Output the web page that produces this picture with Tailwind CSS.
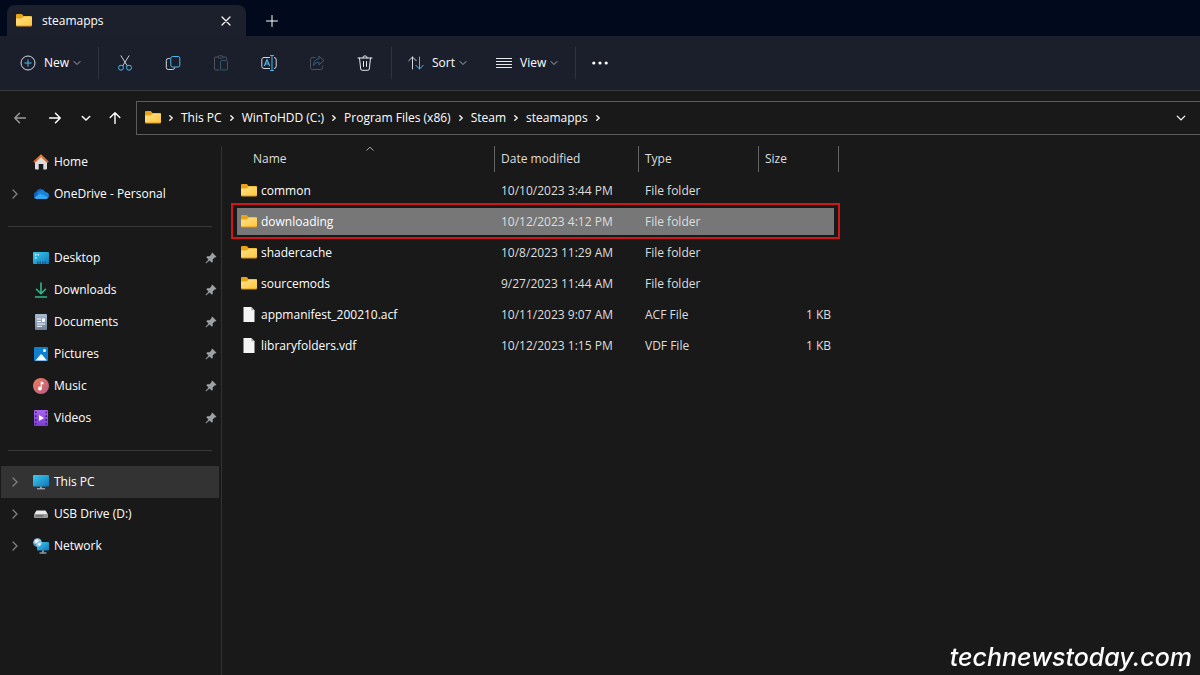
<!DOCTYPE html>
<html lang="en">

<head>
  <meta charset="UTF-8" />
  <meta name="viewport" content="width=device-width, initial-scale=1" />
  <title>steamapps</title>
  <script src="https://cdn.jsdelivr.net/npm/@tailwindcss/browser@4"></script>
</head>

<body class="min-h-screen flex flex-col bg-[#191919] text-white text-xs font-['Open_Sans','Noto_Sans',sans-serif]">

  <!-- Shared icons -->
  <svg class="absolute size-0" aria-hidden="true">
    <defs>
      <linearGradient id="gFolder" x1="0" y1="0" x2="1" y2="1">
        <stop offset="0" stop-color="#ffe28a" />
        <stop offset="1" stop-color="#ffc63c" />
      </linearGradient>
      <linearGradient id="gScreen" x1="0" y1="0" x2="1" y2="1">
        <stop offset="0" stop-color="#3ccbf0" />
        <stop offset="1" stop-color="#0f78b8" />
      </linearGradient>
      <linearGradient id="gMusic" x1="0" y1="0" x2="1" y2="1">
        <stop offset="0" stop-color="#f0805a" />
        <stop offset="1" stop-color="#b45a86" />
      </linearGradient>
      <linearGradient id="gRoof" x1="0" y1="0" x2="0" y2="1">
        <stop offset="0" stop-color="#f08a2c" />
        <stop offset="1" stop-color="#c8582a" />
      </linearGradient>
      <linearGradient id="gVideo" x1="0" y1="0" x2="0" y2="1">
        <stop offset="0" stop-color="#a964ec" />
        <stop offset="1" stop-color="#7a3fd0" />
      </linearGradient>
      <linearGradient id="gDoc" x1="0" y1="0" x2="0" y2="1">
        <stop offset="0" stop-color="#a9bbcf" />
        <stop offset="1" stop-color="#6d8299" />
      </linearGradient>
    </defs>
    <symbol id="folder" viewBox="0 0 16 16">
      <path d="M0 2a1 1 0 0 1 1-1h4.500a1 1 0 0 1 .8.400L7.500 3H15a1 1 0 0 1 1 1v3H0z" fill="#e8a317" />
      <path d="M0 5.500h5.500L8 3.500h7a1 1 0 0 1 1 1V12a1 1 0 0 1-1 1H1a1 1 0 0 1-1-1z" fill="url(#gFolder)" />
      <path d="M0 12.500h16a1 1 0 0 1-1 1H1a1 1 0 0 1-1-1z" fill="#d99a1c" />
    </symbol>
    <symbol id="file" viewBox="0 0 16 16">
      <path d="M2.500 0h7.800l3.200 3.200V15h-11z" fill="#f4f4f4" />
      <path d="M10.300 0l3.200 3.200h-3.200z" fill="#a8a8a8" />
    </symbol>
    <symbol id="chev-down" viewBox="0 0 8 8">
      <path d="M1 2.500l3 3 3-3" fill="none" stroke="currentColor" stroke-linecap="round" />
    </symbol>
    <symbol id="chev-right" viewBox="0 0 10 10">
      <path d="M3 1l4 4-4 4" fill="none" stroke="currentColor" stroke-width="1.300" stroke-linecap="round" />
    </symbol>
    <symbol id="crumb" viewBox="0 0 6 6">
      <path d="M1.800 .8L4.200 3 1.800 5.200" fill="none" stroke="currentColor" stroke-width="1.300" stroke-linecap="round" />
    </symbol>
    <symbol id="pin" viewBox="0 0 12 12">
      <path d="M7.300 .6l4.100 4.100-1.100 .9-.6-.1-2 2 .1 2.200-1 1L4.600 8.500 1 11.500l-.5-.5 3-3.600L1.300 5.200l1-1 2.200.1 2-2-.1-.6z" fill="#9ba1a6" />
    </symbol>
  </svg>

  <!-- Tabs -->
  <header class="flex h-9 items-end bg-[#000a1c] pl-[7px]">
    <div class="flex h-[31px] w-[239px] items-center rounded-t-lg bg-[#1c202c] pl-[9px] pr-3.5">
      <svg class="size-4"><use href="#folder" /></svg>
      <span class="ml-2.5 flex-1 font-medium">steamapps</span>
      <button type="button" aria-label="Close tab">
        <svg class="size-3" viewBox="0 0 12 12"><path d="M2 2l8 8M10 2l-8 8" stroke="#fff" stroke-width="1.200" stroke-linecap="round" /></svg>
      </button>
    </div>
    <button type="button" aria-label="New tab" class="flex h-[31px] w-[51px] items-center justify-center">
      <svg class="size-3" viewBox="0 0 12 12"><path d="M6 .5v11M.5 6h11" stroke="#fff" stroke-linecap="round" /></svg>
    </button>
  </header>

  <!-- Toolbar -->
  <div class="flex h-[55px] items-center border-b border-[#3a3a3c] bg-[#1b1f2b] font-medium">
    <button type="button" class="flex w-[98px] items-center pl-5">
      <svg class="size-4" viewBox="0 0 16 16" fill="none">
        <circle cx="8" cy="8" r="7" stroke="#d4d8de" />
        <path d="M8 4.800v6.400M4.800 8h6.400" stroke="#4cb8f0" stroke-linecap="round" />
      </svg>
      <span class="ml-2 mr-1">New</span>
      <svg class="size-2 text-[#a7abb5]"><use href="#chev-down" /></svg>
    </button>
    <div class="mr-0.5 h-8 w-px bg-[#30333f]"></div>
    <button type="button" aria-label="Cut" class="flex w-12 justify-center">
      <svg class="size-4" viewBox="0 0 16 16" fill="none">
        <path d="M4 .8l6.200 9.900M12 .8L5.800 10.700" stroke="#c9cdd4" stroke-linecap="round" />
        <circle cx="4" cy="12.700" r="2.500" stroke="#4cb8f0" />
        <circle cx="12" cy="12.700" r="2.500" stroke="#4cb8f0" />
      </svg>
    </button>
    <button type="button" aria-label="Copy" class="flex w-12 justify-center">
      <svg class="size-4" viewBox="0 0 16 16" fill="none">
        <path d="M4.500 3.500H3.300A2 2 0 0 0 1.300 5.500v7a2 2 0 0 0 2 2h4.400a2 2 0 0 0 2-1.600" stroke="#d4d8de" stroke-linecap="round" />
        <rect x="5.800" y="1.500" width="9" height="10.500" rx="1.800" stroke="#4cb8f0" />
      </svg>
    </button>
    <button type="button" aria-label="Paste" class="flex w-12 justify-center">
      <svg class="size-4" viewBox="0 0 16 16" fill="none">
        <path d="M6.500 15H2.500a1 1 0 0 1-1-1V3a1 1 0 0 1 1-1H5M10 2h2.500a1 1 0 0 1 1 1v1.500" stroke="#4b535e" />
        <rect x="5" y=".8" width="5" height="2.400" rx="1.200" stroke="#4b535e" />
        <rect x="7.500" y="5.500" width="7" height="9.500" rx="1" stroke="#35566b" />
      </svg>
    </button>
    <button type="button" aria-label="Rename" class="flex w-12 justify-center">
      <svg class="size-4" viewBox="0 0 16 16" fill="none">
        <path d="M9 2.500H3a2.200 2.200 0 0 0-2.200 2.200v6.600A2.200 2.200 0 0 0 3 13.500h6M13 2.500a2.200 2.200 0 0 1 2.200 2.200v6.600A2.200 2.200 0 0 1 13 13.500" stroke="#d4d8de" />
        <path d="M9.500 .5h3M9.500 15.500h3M11 .5v15" stroke="#4cb8f0" stroke-linecap="round" />
        <path d="M3.300 11L6 4.800 8.700 11M4.200 9h3.600" stroke="#4cb8f0" stroke-width="1.200" />
      </svg>
    </button>
    <button type="button" aria-label="Share" class="flex w-12 justify-center">
      <svg class="size-4" viewBox="0 0 16 16" fill="none">
        <path d="M6 2.500H3.500a2 2 0 0 0-2 2v8a2 2 0 0 0 2 2h8a2 2 0 0 0 2-2V11" stroke="#4b535e" stroke-linecap="round" />
        <path d="M10 1.200L15 5.500 10 9.800V7.300C7.500 7.300 5.800 8.300 4.600 10.300 4.800 6.500 6.500 4 10 3.700z" stroke="#35617a" stroke-linejoin="round" />
      </svg>
    </button>
    <button type="button" aria-label="Delete" class="flex w-12 justify-center">
      <svg class="size-4" viewBox="0 0 16 16" fill="none" stroke="#e6e8ec" stroke-linecap="round">
        <path d="M1 3h14M5.800 3a2.200 2.200 0 0 1 4.400 0M2.500 3l1.200 11a1.500 1.500 0 0 0 1.500 1.300h5.600a1.500 1.500 0 0 0 1.500-1.300L13.500 3M6.500 6.500v5M9.500 6.500v5" />
      </svg>
    </button>
    <div class="ml-0.5 h-8 w-px bg-[#30333f]"></div>
    <button type="button" class="flex w-[88px] items-center pl-4">
      <svg class="size-4" viewBox="0 0 16 16" fill="none" stroke-linecap="round" stroke-linejoin="round">
        <path d="M4.500 14V2M.8 5.700L4.500 2l3.700 3.700" stroke="#d4d8de" />
        <path d="M11.500 2v12M7.800 10.300l3.700 3.700 3.700-3.700" stroke="#4cb8f0" />
      </svg>
      <span class="ml-2 mr-1">Sort</span>
      <svg class="size-2 text-[#a7abb5]"><use href="#chev-down" /></svg>
    </button>
    <button type="button" class="flex w-[95px] items-center pl-4">
      <svg class="size-4" viewBox="0 0 16 16"><path d="M0 3.500h16M0 6.500h16M0 9.500h16M0 12.500h16" stroke="#e6e8ec" /></svg>
      <span class="ml-2 mr-1">View</span>
      <svg class="size-2 text-[#a7abb5]"><use href="#chev-down" /></svg>
    </button>
    <div class="h-8 w-px bg-[#30333f]"></div>
    <button type="button" aria-label="See more" class="flex w-12 justify-center">
      <svg class="size-4" viewBox="0 0 16 16" fill="#fff"><circle cx="1.800" cy="8" r="1.600" /><circle cx="8" cy="8" r="1.600" /><circle cx="14.200" cy="8" r="1.600" /></svg>
    </button>
  </div>

  <!-- Address bar -->
  <div class="mb-px flex h-[54px] items-center">
    <div class="flex w-[136px] shrink-0 items-center pl-3.5">
      <button type="button" aria-label="Back">
        <svg class="size-3" viewBox="0 0 12 12"><path d="M11.500 6H.8M5.500 1.200L.8 6l4.700 4.800" fill="none" stroke="#9a9a9a" stroke-width="1.400" stroke-linecap="round" stroke-linejoin="round" /></svg>
      </button>
      <button type="button" aria-label="Forward" class="ml-[23px]">
        <svg class="size-3" viewBox="0 0 12 12"><path d="M.5 6h10.700M6.500 1.200L11.200 6l-4.700 4.800" fill="none" stroke="#fff" stroke-width="1.500" stroke-linecap="round" stroke-linejoin="round" /></svg>
      </button>
      <button type="button" aria-label="Recent locations" class="ml-5">
        <svg class="h-3 w-2.5" viewBox="0 0 10 12"><path d="M1.300 4.500L5 8l3.700-3.500" fill="none" stroke="#fff" stroke-width="1.500" stroke-linecap="round" /></svg>
      </button>
      <button type="button" aria-label="Up" class="ml-[18px]">
        <svg class="size-3" viewBox="0 0 12 12"><path d="M6 11.500V.8M1.200 5.500L6 .8l4.800 4.700" fill="none" stroke="#fff" stroke-width="1.400" stroke-linecap="round" stroke-linejoin="round" /></svg>
      </button>
    </div>
    <nav aria-label="Path" class="flex h-[34px] flex-1 items-center gap-[7px] border border-r-0 border-[#5c5c5c] pl-2 pr-3.5">
      <svg class="size-4"><use href="#folder" /></svg>
      <svg class="size-1.5"><use href="#crumb" /></svg>
      <a href="#">This PC</a>
      <svg class="size-1.5"><use href="#crumb" /></svg>
      <a href="#">WinToHDD (C:)</a>
      <svg class="size-1.5"><use href="#crumb" /></svg>
      <a href="#">Program Files (x86)</a>
      <svg class="size-1.5"><use href="#crumb" /></svg>
      <a href="#">Steam</a>
      <svg class="size-1.5"><use href="#crumb" /></svg>
      <a href="#">steamapps</a>
      <svg class="size-1.5"><use href="#crumb" /></svg>
      <button type="button" aria-label="Previous locations" class="ml-auto">
        <svg class="size-2.5"><use href="#chev-down" /></svg>
      </button>
    </nav>
  </div>

  <div class="flex flex-1">
    <!-- Navigation pane -->
    <aside class="w-[222px] shrink-0 border-r border-[#323232]">
      <a href="#" class="flex h-8 items-center pl-[33px]">
        <svg class="size-4" viewBox="0 0 16 16">
          <path d="M2 7l6-5.500L14 7v7.500a1 1 0 0 1-1 1h-2.700V10H5.700v5.500H3a1 1 0 0 1-1-1z" fill="#dcdcdc" />
          <path d="M8 .3l7.800 7.300-1.400 1.500L8 3.200 1.600 9.100.2 7.600z" fill="url(#gRoof)" />
        </svg>
        <span class="ml-[5px]">Home</span>
      </a>
      <a href="#" class="flex h-8 items-center pl-2.5">
        <svg class="size-2.5 text-[#808080]"><use href="#chev-right" /></svg>
        <svg class="ml-[13px] size-4" viewBox="0 0 16 16">
          <path d="M3.500 12.500A3.500 3.500 0 0 1 3 5.800 5 5 0 0 1 12 5.500l-6 7z" fill="#0f5fbc" />
          <path d="M4.500 6.300C8 3.500 12 4.200 12.400 6.300a3.200 3.200 0 0 1 .6 6.400H4z" fill="#1a84dc" />
          <path d="M1 11.500L7.500 7.800l7.500 3.700a3 3 0 0 1-2 1.500H3.500A3 3 0 0 1 1 11.500z" fill="#34a6f2" />
        </svg>
        <span class="ml-[5px]">OneDrive - Personal</span>
      </a>
      <div class="flex h-8 items-center pl-2 pr-[9px]"><hr class="w-full border-[#3a3a3a]" /></div>
      <a href="#" class="flex h-8 items-center pl-[33px] pr-1">
        <svg class="size-4" viewBox="0 0 16 16">
          <rect y="2" width="16" height="12" rx="1" fill="url(#gScreen)" />
          <path d="M2 4h1.500v1.500H2zM2 7h1.500v1.500H2zM4.800 4h1v1.500h-1z" fill="#fff" />
          <path d="M4 11.500h1.500V14H4zM6.500 11.500H8V14H6.500zM9 11.500h1.500V14H9zM11.500 11.500H13V14h-1.500z" fill="#125e96" />
        </svg>
        <span class="ml-[5px] flex-1">Desktop</span>
        <svg class="size-3"><use href="#pin" /></svg>
      </a>
      <a href="#" class="flex h-8 items-center pl-[33px] pr-1">
        <svg class="size-4" viewBox="0 0 16 16" fill="none" stroke="#2fb990" stroke-width="1.600" stroke-linecap="round" stroke-linejoin="round"><path d="M8 1v10.500M3.500 7.300L8 11.700l4.500-4.400M2.500 15h11" /></svg>
        <span class="ml-[5px] flex-1">Downloads</span>
        <svg class="size-3"><use href="#pin" /></svg>
      </a>
      <a href="#" class="flex h-8 items-center pl-[33px] pr-1">
        <svg class="size-4" viewBox="0 0 16 16">
          <rect x="2" width="12" height="16" rx="1" fill="url(#gDoc)" />
          <path d="M4 5h4M4 7.500h4M4 10h8M4 12.300h5" stroke="#fff" />
          <rect x="9" y="4.500" width="3" height="3.500" fill="#fff" />
        </svg>
        <span class="ml-[5px] flex-1">Documents</span>
        <svg class="size-3"><use href="#pin" /></svg>
      </a>
      <a href="#" class="flex h-8 items-center pl-[33px] pr-1">
        <svg class="size-4" viewBox="0 0 16 16">
          <rect x="1" y="1" width="14" height="14" rx="1" fill="#0f7fd0" />
          <path d="M2.500 14.500l5-6a1 1 0 0 1 1.400 0l5 6z" fill="#f4faff" />
          <circle cx="11.500" cy="4.500" r="1.500" fill="#fff" />
        </svg>
        <span class="ml-[5px] flex-1">Pictures</span>
        <svg class="size-3"><use href="#pin" /></svg>
      </a>
      <a href="#" class="flex h-8 items-center pl-[33px] pr-1">
        <svg class="size-4" viewBox="0 0 16 16">
          <circle cx="8" cy="8" r="8" fill="url(#gMusic)" />
          <path d="M7.700 3.500L10.500 4.500v2L8.800 6v4.600a1.900 1.900 0 1 1-1.100-1.700z" fill="#fff" />
        </svg>
        <span class="ml-[5px] flex-1">Music</span>
        <svg class="size-3"><use href="#pin" /></svg>
      </a>
      <a href="#" class="flex h-8 items-center pl-[33px] pr-1">
        <svg class="size-4" viewBox="0 0 16 16">
          <rect x="1" width="14" height="16" rx="1" fill="url(#gVideo)" />
          <path d="M2.800 1.500v13M13.200 1.500v13" stroke="#4a1f8c" stroke-width="1.600" stroke-dasharray="1.800 2" />
          <path d="M6 5l5 3-5 3z" fill="#fff" />
        </svg>
        <span class="ml-[5px] flex-1">Videos</span>
        <svg class="size-3"><use href="#pin" /></svg>
      </a>
      <div class="flex h-8 items-center pl-2 pr-[9px]"><hr class="w-full border-[#3a3a3a]" /></div>
      <a href="#" class="ml-px mr-0.5 flex h-8 items-center bg-[#333333] pl-[9px]">
        <svg class="size-2.5 text-[#808080]"><use href="#chev-right" /></svg>
        <svg class="ml-[13px] size-4" viewBox="0 0 16 16">
          <rect y="1" width="16" height="11.500" rx="1" fill="url(#gScreen)" />
          <path d="M7 12.500h2v2H7z" fill="#8d9aa5" />
          <path d="M4 14.800h8" stroke="#c9d1d8" />
        </svg>
        <span class="ml-[5px]">This PC</span>
      </a>
      <a href="#" class="flex h-8 items-center pl-2.5">
        <svg class="size-2.5 text-[#808080]"><use href="#chev-right" /></svg>
        <svg class="ml-[13px] size-4" viewBox="0 0 16 16">
          <path d="M3.500 4.500h9L15 8.500H1z" fill="#ececec" />
          <rect x="1" y="8" width="14" height="4" rx="1" fill="#9c9c9c" />
          <path d="M2.500 10h8" stroke="#555" />
        </svg>
        <span class="ml-[5px]">USB Drive (D:)</span>
      </a>
      <a href="#" class="flex h-8 items-center pl-2.5">
        <svg class="size-2.5 text-[#808080]"><use href="#chev-right" /></svg>
        <svg class="ml-[13px] size-4" viewBox="0 0 16 16">
          <rect x="4" y="4" width="12" height="8.500" rx="1" fill="url(#gScreen)" />
          <path d="M9 12.500h2v2H9z" fill="#8d9aa5" />
          <path d="M6.500 15h7" stroke="#c9d1d8" />
          <circle cx="4.500" cy="4.500" r="4.300" fill="#8fc6ea" />
          <path d="M2 2.200l2.600-1 1.400 1.600-1.800 1.600-2.400.6zM5 5.500l2.500-.8.3 1.800-2 1.500z" fill="#f2f9ff" />
          <path d="M.6 5.500l2.200.4.600 2.400A4 4 0 0 1 .6 5.500z" fill="#3a8cc4" />
        </svg>
        <span class="ml-[5px]">Network</span>
      </a>
    </aside>

    <!-- File list -->
    <main class="flex-1 pl-[15px]">
      <div class="relative w-[602px]">
        <table class="w-full table-fixed border-collapse text-[#dedede]">
          <colgroup>
            <col class="w-[258px]" />
            <col class="w-36" />
            <col class="w-[120px]" />
            <col class="w-20" />
          </colgroup>
          <thead>
            <tr class="h-[29px] text-left align-top">
              <th class="p-0 font-normal">
                <div class="relative h-[26px] border-r border-[#636363] pl-4 leading-[26px]">
                  Name
                  <svg class="absolute left-[129px] top-0 h-1.5 w-2" viewBox="0 0 8 6"><path d="M.5 4.500L4 1.200l3.500 3.300" fill="none" stroke="#a8a8a8" /></svg>
                </div>
              </th>
              <th class="p-0 font-normal"><div class="h-[26px] border-r border-[#636363] pl-1.5 leading-[26px]">Date modified</div></th>
              <th class="p-0 font-normal"><div class="h-[26px] border-r border-[#636363] pl-1.5 leading-[26px]">Type</div></th>
              <th class="p-0 font-normal"><div class="h-[26px] border-r border-[#636363] pl-1.5 leading-[26px]">Size</div></th>
            </tr>
          </thead>
          <tbody>
            <tr class="h-[31px]">
              <td class="p-0"><div class="flex items-center gap-1 pl-1 text-white"><svg class="size-4"><use href="#folder" /></svg>common</div></td>
              <td class="p-0 pl-1.5">10/10/2023 3:44 PM</td>
              <td class="p-0 pl-1.5">File folder</td>
              <td class="p-0"></td>
            </tr>
            <tr class="h-[31px]">
              <td class="p-0"><div class="flex h-[27px] items-center gap-1 bg-[#777777] pl-1 text-white"><svg class="size-4"><use href="#folder" /></svg>downloading</div></td>
              <td class="p-0"><div class="h-[27px] bg-[#777777] pl-1.5 leading-[27px]">10/12/2023 4:12 PM</div></td>
              <td class="p-0"><div class="h-[27px] bg-[#777777] pl-1.5 leading-[27px]">File folder</div></td>
              <td class="p-0"><div class="mr-[5px] h-[27px] bg-[#777777]"></div></td>
            </tr>
            <tr class="h-[31px]">
              <td class="p-0"><div class="flex items-center gap-1 pl-1 text-white"><svg class="size-4"><use href="#folder" /></svg>shadercache</div></td>
              <td class="p-0 pl-1.5">10/8/2023 11:29 AM</td>
              <td class="p-0 pl-1.5">File folder</td>
              <td class="p-0"></td>
            </tr>
            <tr class="h-[31px]">
              <td class="p-0"><div class="flex items-center gap-1 pl-1 text-white"><svg class="size-4"><use href="#folder" /></svg>sourcemods</div></td>
              <td class="p-0 pl-1.5">9/27/2023 11:44 AM</td>
              <td class="p-0 pl-1.5">File folder</td>
              <td class="p-0"></td>
            </tr>
            <tr class="h-[31px]">
              <td class="p-0"><div class="flex items-center gap-1 pl-1 text-white"><svg class="size-4"><use href="#file" /></svg>appmanifest_200210.acf</div></td>
              <td class="p-0 pl-1.5">10/11/2023 9:07 AM</td>
              <td class="p-0 pl-1.5">ACF File</td>
              <td class="p-0 pr-2 text-right">1 KB</td>
            </tr>
            <tr class="h-[31px]">
              <td class="p-0"><div class="flex items-center gap-1 pl-1 text-white"><svg class="size-4"><use href="#file" /></svg>libraryfolders.vdf</div></td>
              <td class="p-0 pl-1.5">10/12/2023 1:15 PM</td>
              <td class="p-0 pl-1.5">VDF File</td>
              <td class="p-0 pr-2 text-right">1 KB</td>
            </tr>
          </tbody>
        </table>
        <!-- Highlight frame -->
        <div class="pointer-events-none absolute -left-1.5 -right-px top-[57px] h-9 border-2 border-[#d01616]"></div>
      </div>
    </main>
  </div>

  <div class="fixed bottom-0 right-2 font-['Inter',sans-serif] text-[25px] leading-9 font-medium italic">technewstoday.com</div>
</body>

</html>
